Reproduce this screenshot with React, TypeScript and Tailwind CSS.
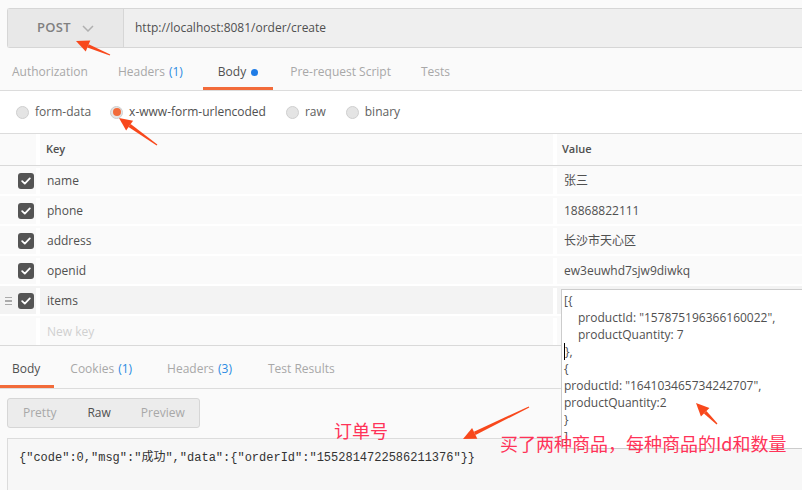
import React from "react";

const FONT = { fontFamily: '"Open Sans", "Noto Sans CJK SC", sans-serif' };

function Arrow({ x1, y1, x2, y2 }: { x1: number; y1: number; x2: number; y2: number }) {
  const dx = x2 - x1;
  const dy = y2 - y1;
  const len = Math.sqrt(dx * dx + dy * dy);
  const ux = dx / len;
  const uy = dy / len;
  const hl = 13;
  const hw = 6;
  const bx = x2 - ux * hl;
  const by = y2 - uy * hl;
  const px = -uy;
  const py = ux;
  const pts = `${x2},${y2} ${bx + px * hw},${by + py * hw} ${bx - px * hw},${by - py * hw}`;
  const tail = `${x1 + px * 0.6},${y1 + py * 0.6} ${x1 - px * 0.6},${y1 - py * 0.6} ${bx - px * 1.8},${by - py * 1.8} ${bx + px * 1.8},${by + py * 1.8}`;
  return (
    <g fill="#f8481c">
      <polygon points={tail} />
      <polygon points={pts} />
    </g>
  );
}

function Check() {
  return (
    <div className="w-[16px] h-[16px] rounded-[3px] bg-[#555555] flex items-center justify-center">
      <svg width="10" height="8" viewBox="0 0 10 8">
        <path d="M1.2 4.2 L3.8 6.6 L8.8 1.4" stroke="white" strokeWidth="1.8" fill="none" strokeLinecap="round" strokeLinejoin="round" />
      </svg>
    </div>
  );
}

function Radio({ on }: { on?: boolean }) {
  return (
    <div className="w-[13px] h-[13px] rounded-full border border-[#cfcfcf] bg-[#e4e4e4] flex items-center justify-center">
      {on && <div className="w-[8px] h-[8px] rounded-full bg-[#f26b3a]" />}
    </div>
  );
}

const rows = [
  { k: "name", v: "张三" },
  { k: "phone", v: "18868822111" },
  { k: "address", v: "长沙市天心区" },
  { k: "openid", v: "ew3euwhd7sjw9diwkq" },
];

export default function App() {
  return (
    <div className="relative w-[802px] h-[490px] overflow-hidden bg-[#fafafa] text-[12px] text-[#505050]" style={FONT}>
      {/* request bar */}
      <div className="pt-[8px] pl-[7px]">
        <div className="flex h-[40px] border-y border-l border-[#d6d6d6] bg-[#efefef] rounded-l-[3px]">
          <div className="w-[116px] border-r border-[#d6d6d6] bg-[#e8e8e8] flex items-center pl-[29px] gap-[11px]">
            <span className="text-[13px] font-semibold text-[#808080] tracking-[0.3px]">POST</span>
            <svg width="12" height="7" viewBox="0 0 12 7">
              <path d="M1 1 L6 6 L11 1" stroke="#b0b0b0" strokeWidth="1.5" fill="none" />
            </svg>
          </div>
          <div className="flex items-center pl-[11px] text-[12px] text-[#505050]">http://localhost:8081/order/create</div>
        </div>
      </div>

      {/* tabs */}
      <div className="flex h-[43px] pt-[6px] border-b border-[#dcdcdc] text-[12px] text-[#a8a8a8]">
        <div className="pl-[12px] flex items-center">Authorization</div>
        <div className="ml-[30px] flex items-center">
          Headers <span className="ml-[4px] text-[#2b8ae2]">(1)</span>
        </div>
        <div className="ml-[20px] relative flex items-center px-[15px] text-[#505050]">
          Body
          <span className="ml-[5px] w-[7px] h-[7px] rounded-full bg-[#1f7ce6]" />
          <div className="absolute left-0 right-0 bottom-0 h-[3px] bg-[#f26b3a]" />
        </div>
        <div className="ml-[17px] flex items-center">Pre-request Script</div>
        <div className="ml-[30px] flex items-center">Tests</div>
      </div>

      {/* radio row */}
      <div className="flex items-center h-[43px] bg-white border-b border-[#dcdcdc] pl-[16px] text-[12px]">
        <Radio />
        <span className="ml-[6px] text-[#606060]">form-data</span>
        <div className="ml-[19px]"><Radio on /></div>
        <span className="ml-[6px] text-[#505050]">x-www-form-urlencoded</span>
        <div className="ml-[20px]"><Radio /></div>
        <span className="ml-[6px] text-[#606060]">raw</span>
        <div className="ml-[20px]"><Radio /></div>
        <span className="ml-[6px] text-[#606060]">binary</span>
      </div>

      {/* table */}
      <div className="bg-white">
        <div className="flex h-[32px] border-b border-[#d9d9d9] bg-[#fafafa]">
          <div className="w-[36px] bg-[#fafafa]" />
          <div className="w-[4px] bg-white" />
          <div className="w-[513px] flex items-center pl-[6px] text-[11px] font-semibold text-[#505050]">Key</div>
          <div className="w-[4px] bg-white" />
          <div className="flex-1 flex items-center pl-[5px] text-[11px] font-semibold text-[#505050]">Value</div>
        </div>
        {rows.map((r) => (
          <div key={r.k} className="flex h-[30px] pt-[2px] border-b-2 border-white bg-[#fafafa]">
            <div className="w-[36px] flex items-center justify-end pr-[2px]"><Check /></div>
            <div className="w-[4px] bg-white" />
            <div className="w-[513px] flex items-center pl-[7px] text-[12px]">{r.k}</div>
            <div className="w-[4px] bg-white" />
            <div className="flex-1 flex items-center pl-[7px] text-[12px]">{r.v}</div>
          </div>
        ))}
        <div className="flex h-[30px] pt-[2px] border-b-2 border-white bg-[#f3f3f3]">
          <div className="w-[36px] flex items-center justify-end pr-[2px] gap-[6px]">
            <div className="flex flex-col gap-[2px]">
              <div className="w-[7px] h-[1.5px] bg-[#aaaaaa]" />
              <div className="w-[7px] h-[1.5px] bg-[#aaaaaa]" />
              <div className="w-[7px] h-[1.5px] bg-[#aaaaaa]" />
            </div>
            <Check />
          </div>
          <div className="w-[4px] bg-white" />
          <div className="w-[513px] flex items-center pl-[7px] text-[12px]">items</div>
          <div className="w-[4px] bg-white" />
          <div className="flex-1" />
        </div>
        <div className="flex h-[30px] pt-[2px] bg-[#fafafa] border-b border-[#d9d9d9]">
          <div className="w-[36px]" />
          <div className="w-[4px] bg-white" />
          <div className="w-[513px] flex items-center pl-[7px] text-[12px] text-[#d0d0d0]">New key</div>
          <div className="w-[4px] bg-white" />
          <div className="flex-1" />
        </div>
      </div>

      {/* response tabs */}
      <div className="flex h-[43px] pt-[3px] border-b border-[#dcdcdc] text-[12px] text-[#a8a8a8]">
        <div className="relative flex items-center pl-[12px] pr-[14px] text-[#505050]">
          Body
          <div className="absolute left-0 right-0 bottom-0 h-[3px] bg-[#f26b3a]" />
        </div>
        <div className="flex items-center pl-[16px] pr-[35px]">
          Cookies <span className="ml-[4px] text-[#2b8ae2]">(1)</span>
        </div>
        <div className="flex items-center pr-[36px]">
          Headers <span className="ml-[4px] text-[#2b8ae2]">(3)</span>
        </div>
        <div className="flex items-center">Test Results</div>
      </div>

      <div className="pl-[7px] pt-[9px]">
        <div className="flex w-[193px] h-[30px] bg-[#ececec] border border-[#d6d6d6] rounded-[3px] text-[12px] items-center">
          <span className="ml-[15px] text-[#a8a8a8]">Pretty</span>
          <span className="ml-[31px] text-[#505050]">Raw</span>
          <span className="ml-[30px] text-[#a8a8a8]">Preview</span>
        </div>
      </div>

      <div className="pl-[7px] pt-[10px]">
        <div className="h-[60px] bg-[#f7f7f7] border-t border-l border-[#dcdcdc] pl-[11px] pt-[10px] text-[12px] text-[#333333]" style={{ fontFamily: '"Liberation Mono", "Noto Sans CJK SC", monospace' }}>
          {'{"code":0,"msg":"成功","data":{"orderId":"1552814722586211376"}}'}
        </div>
      </div>

      {/* items value popup */}
      <div className="absolute left-[561px] top-[289px] w-[245px] h-[160px] bg-white border border-[#cccccc] pl-[2px] pt-[2px] text-[12px] leading-[17px] text-[#505050]">
        <div>[{"{"}</div>
        <div className="pl-[14px]">productId: "157875196366160022",</div>
        <div className="pl-[14px]">productQuantity: 7</div>
        <div><span className="border-l border-black">{"},"}</span></div>
        <div>{"{"}</div>
        <div>productId: "164103465734242707",</div>
        <div>productQuantity:2</div>
        <div>{"}"}</div>
        <div>]</div>
      </div>

      {/* annotations */}
      <div className="absolute left-[334px] top-[418px] text-[18px] leading-[24px] text-[#ff3358]" style={{ fontFamily: '"Noto Sans CJK SC", sans-serif' }}>订单号</div>
      <div className="absolute left-[500px] top-[431px] text-[18px] leading-[24px] text-[#ff3358]" style={{ fontFamily: '"Noto Sans CJK SC", sans-serif' }}>买了两种商品，每种商品的Id和数量</div>

      <svg className="absolute left-0 top-0 pointer-events-none" width="802" height="490">
        <Arrow x1={110} y1={55} x2={76} y2={41} />
        <Arrow x1={157} y1={145} x2={119} y2={118} />
        <Arrow x1={529} y1={407} x2={463} y2={439} />
        <Arrow x1={717} y1={424} x2={696} y2={403} />
      </svg>
    </div>
  );
}
